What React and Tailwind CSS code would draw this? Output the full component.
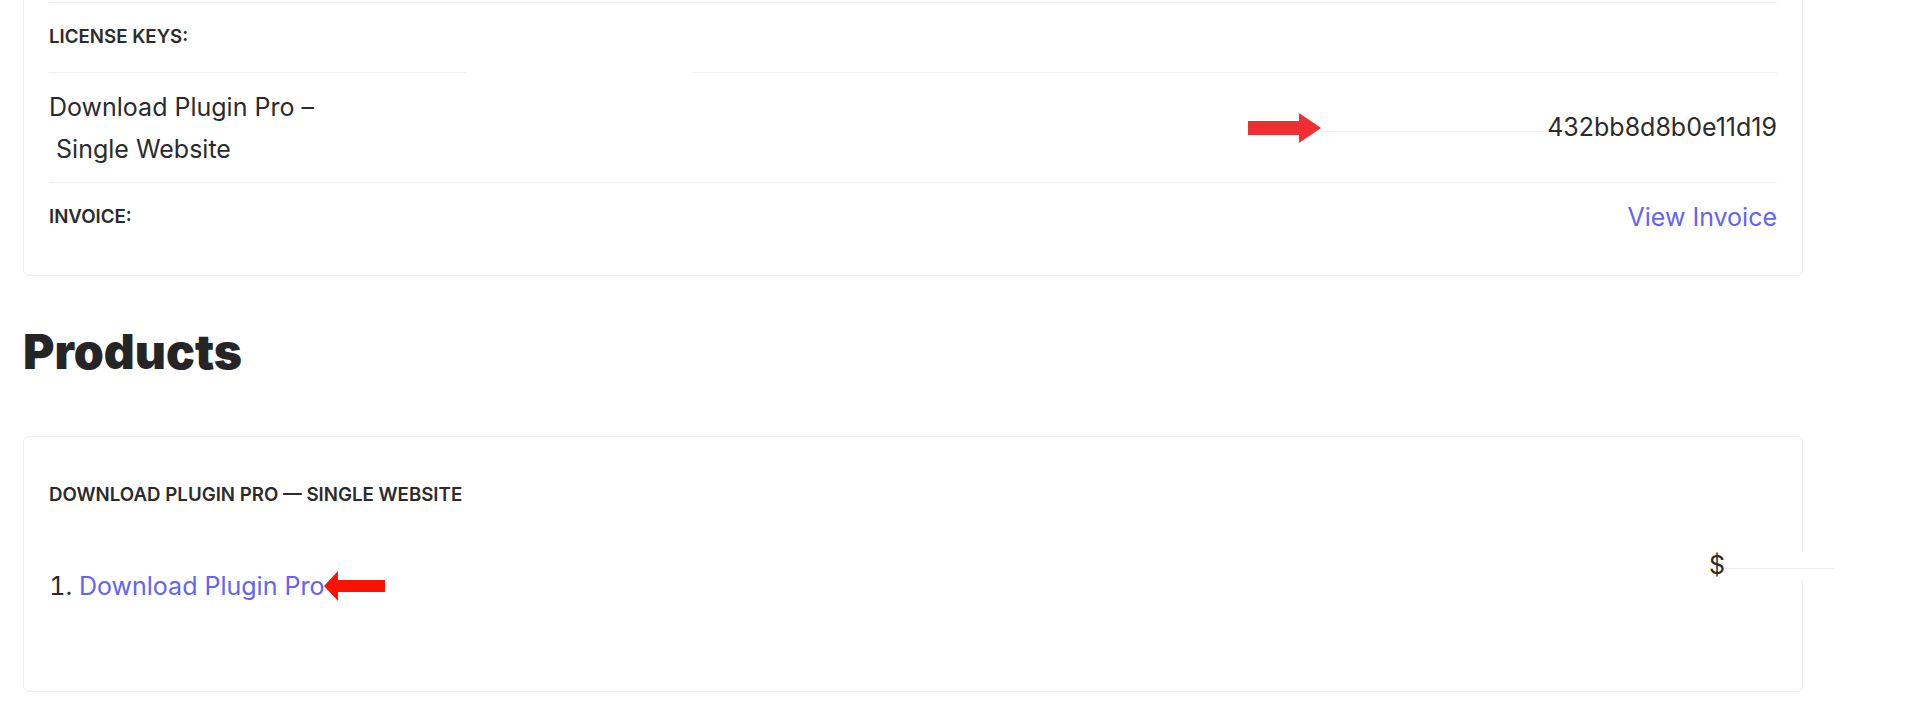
import React from 'react';

const RightArrow = () => (
  <svg width="73" height="30" viewBox="0 0 73 30" className="shrink-0">
    <polygon points="0,8 51,8 51,0 73,15 51,30 51,22 0,22" fill="#ee2f33" />
  </svg>
);

const LeftArrow = () => (
  <svg width="61" height="30" viewBox="0 0 61 30" className="shrink-0">
    <polygon points="0,15 14,0 14,9 61,9 61,21 14,21 14,30" fill="#ff1100" />
  </svg>
);

const App = () => {
  return (
    <div className="min-h-screen bg-white pl-[23px] font-['Inter','Noto_Sans',sans-serif] text-[#2b2b2b]">
      {/* order details card, top is scrolled off */}
      <div className="-mt-[40px] w-[1780px] rounded-md border border-[#ececec] px-[25px] pb-[23px]">
        <div className="h-[42px] border-b border-[#efefef]" />
        <div className="flex h-[69px] items-center text-[18.7px] font-semibold uppercase">
          License keys:
        </div>
        <div className="flex">
          <div className="w-[417px] border-t border-[#efefef]" />
          <div className="w-[226px]" />
          <div className="flex-1 border-t border-[#efefef]" />
        </div>
        <div className="flex h-[109px] items-center justify-between">
          <div className="text-[25px] leading-[42px]">
            Download Plugin Pro –<br />&nbsp;Single Website
          </div>
          <div className="flex items-center">
            <RightArrow />
            <div className="mt-[8px] h-px w-[226px] bg-[#eeeeee]" />
            <span className="text-[25px]">432bb8d8b0e11d19</span>
          </div>
        </div>
        <div className="flex h-[70px] items-center justify-between border-t border-[#efefef]">
          <span className="text-[18.7px] font-semibold uppercase">Invoice:</span>
          <a href="#" className="text-[25px] text-[#6363f7]">View Invoice</a>
        </div>
      </div>

      <h2 className="mt-[48px] mb-[56px] text-[48px] font-black leading-[56px] text-[#252525]">Products</h2>

      <div className="relative h-[256px] w-[1780px] rounded-md border border-[#ececec] px-[25px] pt-[46px]">
        <div className="text-[18.7px] font-semibold uppercase leading-[24px]">
          Download Plugin Pro — Single Website
        </div>
        <ol className="mt-[58px] list-decimal pl-[30px] text-[25px] leading-[42px]">
          <li>
            <span className="inline-flex items-center">
              <a href="#" className="text-[#6363f7]">Download Plugin Pro</a>
              <LeftArrow />
            </span>
          </li>
        </ol>
        <div className="absolute left-[1685px] top-[110px] flex items-center">
          <span className="text-[25px]">$</span>
          <div className="flex h-[29px] w-[109px] items-center bg-white">
            <div className="mt-[6px] h-px w-full bg-[#eeeeee]" />
          </div>
        </div>
      </div>
    </div>
  );
};

export default App;
